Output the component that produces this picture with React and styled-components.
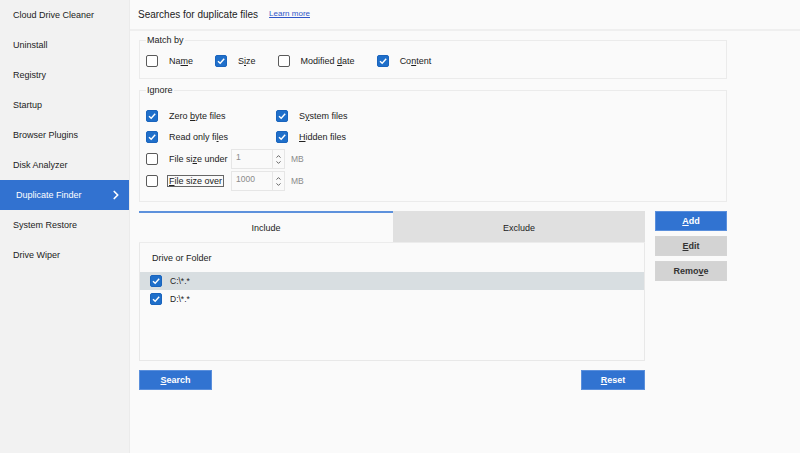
import React from 'react';
import styled, { createGlobalStyle } from 'styled-components';
import { ChevronRight } from 'lucide-react';

const GlobalStyle = createGlobalStyle`
  body {
    margin: 0;
    background: #fafafa;
    font-family: "Liberation Sans", Arial, sans-serif;
    color: #222;
  }
`

const Shell = styled.div`
  display: flex;
  width: 800px;
  height: 453px;
  overflow: hidden;
`
const Sidebar = styled.nav`
  width: 129px;
  flex-shrink: 0;
  background: #f2f2f2;
  border-right: 1px solid #ebebeb;
`
const NavItem = styled.div`
  display: flex;
  align-items: center;
  justify-content: space-between;
  height: 30px;
  padding: 0 6px 0 ${p => (p.$active ? '16px' : '13px')};
  font-size: 9px;
  color: ${p => (p.$active ? '#fff' : '#222')};
  background: ${p => (p.$active ? '#3272d0' : 'transparent')};
`
const Main = styled.main`
  flex: 1;
  display: flex;
  flex-direction: column;
`
const Header = styled.header`
  height: 29px;
  display: flex;
  align-items: center;
  gap: 11px;
  padding-left: 8px;
  border-bottom: 2px solid #efefef;
`
const Title = styled.span`
  font-size: 10px;
  color: #222;
`
const LearnMore = styled.a`
  font-size: 8px;
  color: #2f56c8;
  text-decoration: underline;
  margin-top: -2px;
`
const Content = styled.div`
  width: 588px;
  padding: 4px 0 0 9px;
  display: flex;
  flex-direction: column;
`
const Group = styled.fieldset`
  margin: 0 0 ${p => p.$mb || 0}px 0;
  border: 1px solid #ebebeb;
  padding: ${p => p.$pad};
  min-width: 0;
`
const Legend = styled.legend`
  font-size: 9px;
  line-height: 10px;
  padding: 0 1px;
  margin-left: 0;
  color: #222;
`
const MatchRow = styled.div`
  display: flex;
  align-items: center;
  height: 14px;
`
const Option = styled.label`
  display: flex;
  align-items: center;
  gap: 11px;
  margin-right: ${p => p.$mr ?? 22}px;
  font-size: 9px;
  color: #222;
  flex-shrink: 0;
`
const Box = styled.span`
  width: 12px;
  height: 12px;
  box-sizing: border-box;
  border-radius: 2px;
  flex-shrink: 0;
  display: flex;
  align-items: center;
  justify-content: center;
  border: 1px solid ${p => (p.$on ? '#1a64bd' : '#5a5a5a')};
  background: ${p => (p.$on ? '#1f6fca' : '#fff')};
`
const IgnoreGrid = styled.div`
  display: grid;
  grid-template-columns: 130px 1fr;
  grid-template-rows: 21px 22px 22px 22px;
  align-items: center;
`
const SizeRow = styled.div`
  display: flex;
  align-items: center;
  grid-column: 1 / 3;
`
const SizeLabel = styled.span`
  width: 62px;
  flex-shrink: 0;
`
const Focused = styled.span`
  border: 1px solid #666;
  padding: 0 1px;
  margin-left: -2px;
`
const Spin = styled.div`
  display: flex;
  width: 54px;
  height: 20px;
  box-sizing: border-box;
  border: 1px solid #e6e6e6;
  background: #fafafa;
  margin-right: 6px;
`
const SpinValue = styled.span`
  flex: 1;
  padding: 2px 0 0 4px;
  font-size: 8.5px;
  color: #8a8a8a;
`
const SpinButtons = styled.div`
  width: 11px;
  border-left: 1px solid #e6e6e6;
  display: flex;
  flex-direction: column;
  align-items: center;
  justify-content: center;
  gap: 3px;
`
const Unit = styled.span`
  font-size: 8.5px;
  color: #8a8a8a;
`
const ListArea = styled.div`
  display: flex;
  gap: 10px;
  margin-top: 9px;
`
const Panel = styled.div`
  width: 506px;
  height: 150px;
  box-sizing: border-box;
  border: 1px solid #e8e8e8;
  display: flex;
  flex-direction: column;
`
const Tabs = styled.div`
  display: flex;
  height: 31px;
  border-bottom: 1px solid #ececec;
  margin: -1px -1px 0 -1px;
`
const Tab = styled.div`
  flex: ${p => (p.$active ? '0 0 254px' : '1')};
  display: flex;
  align-items: center;
  justify-content: center;
  font-size: 9px;
  color: #222;
  background: ${p => (p.$active ? '#fafafa' : '#e0e0e0')};
  border-top: 2px solid ${p => (p.$active ? '#5d91dc' : '#e0e0e0')};
  box-sizing: border-box;
`
const ColumnHead = styled.div`
  font-size: 9px;
  padding: 10px 0 0 12px;
  height: 19px;
`
const Entry = styled.div`
  display: flex;
  align-items: center;
  gap: 8px;
  height: 18px;
  padding-left: 10px;
  font-size: 8.5px;
  background: ${p => (p.$selected ? '#d8dee1' : 'transparent')};
`
const SideButtons = styled.div`
  display: flex;
  flex-direction: column;
  gap: 5px;
`
const Button = styled.button`
  width: ${p => p.$w || 72}px;
  height: 20px;
  padding: 0;
  border: 1px solid ${p => (p.$primary ? '#5a8fdc' : '#d4d4d4')};
  background: ${p => (p.$primary ? '#3173d1' : '#d3d3d3')};
  color: ${p => (p.$primary ? '#fff' : '#333')};
  font-family: "Liberation Sans", Arial, sans-serif;
  font-weight: bold;
  font-size: 9px;
`
const Footer = styled.div`
  width: 506px;
  display: flex;
  justify-content: space-between;
  margin-top: 9px;
`

const Check = ({ on }) => (
  <Box $on={on}>
    {on && (
      <svg width="10" height="10" viewBox="0 0 10 10">
        <polyline points="2,5.2 4.2,7.3 8.2,2.8" fill="none" stroke="#fff" strokeWidth="1.4" />
      </svg>
    )}
  </Box>
)

const Arrows = () => (
  <SpinButtons>
    <svg width="5" height="3" viewBox="0 0 5 3">
      <polyline points="0.5,2.6 2.5,0.6 4.5,2.6" fill="none" stroke="#555" strokeWidth="0.9" />
    </svg>
    <svg width="5" height="3" viewBox="0 0 5 3">
      <polyline points="0.5,0.4 2.5,2.4 4.5,0.4" fill="none" stroke="#555" strokeWidth="0.9" />
    </svg>
  </SpinButtons>
)

const navItems = [
  'Cloud Drive Cleaner',
  'Uninstall',
  'Registry',
  'Startup',
  'Browser Plugins',
  'Disk Analyzer',
  'Duplicate Finder',
  'System Restore',
  'Drive Wiper',
]

export default function App() {
  return (
    <Shell>
      <GlobalStyle />
      <Sidebar>
        {navItems.map((name) => (
          <NavItem key={name} $active={name === 'Duplicate Finder'}>
            {name}
            {name === 'Duplicate Finder' && <ChevronRight size={14} strokeWidth={3} color="#fff" />}
          </NavItem>
        ))}
      </Sidebar>
      <Main>
        <Header>
          <Title>Searches for duplicate files</Title>
          <LearnMore>Learn more</LearnMore>
        </Header>
        <Content>
          <Group $pad="9px 6px 10px 6px" $mb={6}>
            <Legend>Match by</Legend>
            <MatchRow>
              <Option><Check /><span>Na<u>m</u>e</span></Option>
              <Option><Check on /><span>S<u>i</u>ze</span></Option>
              <Option><Check /><span>Modified <u>d</u>ate</span></Option>
              <Option><Check on /><span>Co<u>n</u>tent</span></Option>
            </MatchRow>
          </Group>
          <Group $pad="10px 6px 9px 6px">
            <Legend>Ignore</Legend>
            <IgnoreGrid>
              <Option><Check on /><span>Zero <u>b</u>yte files</span></Option>
              <Option><Check on /><span>S<u>y</u>stem files</span></Option>
              <Option><Check on /><span>Read only fi<u>l</u>es</span></Option>
              <Option><Check on /><span><u>H</u>idden files</span></Option>
              <SizeRow>
                <Option $mr={0}><Check /><SizeLabel>File si<u>z</u>e under</SizeLabel></Option>
                <Spin><SpinValue>1</SpinValue><Arrows /></Spin>
                <Unit>MB</Unit>
              </SizeRow>
              <SizeRow>
                <Option $mr={0}><Check /><SizeLabel><Focused><u>F</u>ile size over</Focused></SizeLabel></Option>
                <Spin><SpinValue>1000</SpinValue><Arrows /></Spin>
                <Unit>MB</Unit>
              </SizeRow>
            </IgnoreGrid>
          </Group>
          <ListArea>
            <Panel>
              <Tabs>
                <Tab $active>Include</Tab>
                <Tab>Exclude</Tab>
              </Tabs>
              <ColumnHead>Drive or Folder</ColumnHead>
              <Entry $selected><Check on />C:\*.*</Entry>
              <Entry><Check on />D:\*.*</Entry>
            </Panel>
            <SideButtons>
              <Button $primary><u>A</u>dd</Button>
              <Button><u>E</u>dit</Button>
              <Button>Remo<u>v</u>e</Button>
            </SideButtons>
          </ListArea>
          <Footer>
            <Button $primary $w={73}><u>S</u>earch</Button>
            <Button $primary $w={64}><u>R</u>eset</Button>
          </Footer>
        </Content>
      </Main>
    </Shell>
  );
}
